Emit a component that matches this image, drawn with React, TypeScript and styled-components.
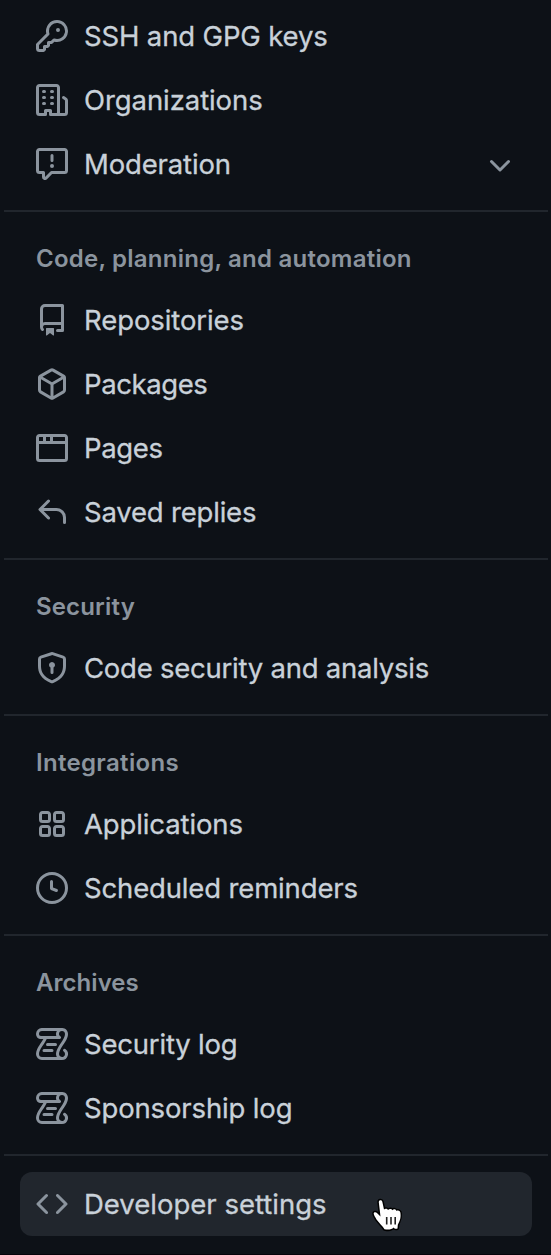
import React from 'react';
import styled, { createGlobalStyle } from 'styled-components';

const GlobalStyle = createGlobalStyle`
  *, *::before, *::after { box-sizing: border-box; }
  body {
    margin: 0;
    background: #0d1117;
    font-family: Inter, "Liberation Sans", sans-serif;
    -webkit-font-smoothing: antialiased;
  }
`;

const icons = {
  key: 'M10.5 0a5.499 5.499 0 1 1-1.288 10.848l-.932.932a.749.749 0 0 1-.53.22H7v.75a.749.749 0 0 1-.22.53l-.5.5a.749.749 0 0 1-.53.22H5v.75a.749.749 0 0 1-.22.53l-.5.5a.749.749 0 0 1-.53.22h-2A1.75 1.75 0 0 1 0 14.25v-2c0-.199.079-.389.22-.53l4.932-4.932A5.5 5.5 0 0 1 10.5 0Zm-4 5.5c-.001.431.069.86.205 1.269a.75.75 0 0 1-.181.768L1.5 12.56v1.69c0 .138.112.25.25.25h1.69l.06-.06v-1.19a.75.75 0 0 1 .75-.75h1.19l.06-.06v-1.19a.75.75 0 0 1 .75-.75h1.19l1.023-1.025a.75.75 0 0 1 .768-.18A4 4 0 1 0 6.5 5.5ZM11 6a1 1 0 1 1 0-2 1 1 0 0 1 0 2Z',
  organization: 'M1.75 16A1.75 1.75 0 0 1 0 14.25V1.75C0 .784.784 0 1.75 0h8.5C11.216 0 12 .784 12 1.75v12.5c0 .085-.006.168-.018.25h2.268a.25.25 0 0 0 .25-.25V8.285a.25.25 0 0 0-.111-.208l-1.055-.703a.749.749 0 1 1 .832-1.248l1.055.703c.487.325.779.871.779 1.456v5.965A1.75 1.75 0 0 1 14.25 16h-3.5a.766.766 0 0 1-.197-.026c-.099.017-.2.026-.303.026h-3a.75.75 0 0 1-.75-.75V14h-1v1.25a.75.75 0 0 1-.75.75Zm-.25-1.75c0 .138.112.25.25.25H4v-1.25a.75.75 0 0 1 .75-.75h2.5a.75.75 0 0 1 .75.75v1.25h2.25a.25.25 0 0 0 .25-.25V1.75a.25.25 0 0 0-.25-.25h-8.5a.25.25 0 0 0-.25.25ZM3.75 6h.5a.75.75 0 0 1 0 1.5h-.5a.75.75 0 0 1 0-1.5ZM3 3.75A.75.75 0 0 1 3.75 3h.5a.75.75 0 0 1 0 1.5h-.5A.75.75 0 0 1 3 3.75Zm4 3A.75.75 0 0 1 7.75 6h.5a.75.75 0 0 1 0 1.5h-.5A.75.75 0 0 1 7 6.75ZM7.75 3h.5a.75.75 0 0 1 0 1.5h-.5a.75.75 0 0 1 0-1.5ZM3 9.75A.75.75 0 0 1 3.75 9h.5a.75.75 0 0 1 0 1.5h-.5A.75.75 0 0 1 3 9.75ZM7.75 9h.5a.75.75 0 0 1 0 1.5h-.5a.75.75 0 0 1 0-1.5Z',
  report: 'M0 1.75C0 .784.784 0 1.75 0h12.5C15.216 0 16 .784 16 1.75v9.5A1.75 1.75 0 0 1 14.25 13H8.06l-2.573 2.573A1.458 1.458 0 0 1 3 14.543V13H1.75A1.75 1.75 0 0 1 0 11.25Zm1.75-.25a.25.25 0 0 0-.25.25v9.5c0 .138.112.25.25.25h2a.75.75 0 0 1 .75.75v2.19l2.72-2.72a.749.749 0 0 1 .53-.22h6.5a.25.25 0 0 0 .25-.25v-9.5a.25.25 0 0 0-.25-.25Zm7 2.25v2.5a.75.75 0 0 1-1.5 0v-2.5a.75.75 0 0 1 1.5 0ZM9 9a1 1 0 1 1-2 0 1 1 0 0 1 2 0Z',
  repo: 'M2 2.5A2.5 2.5 0 0 1 4.5 0h8.75a.75.75 0 0 1 .75.75v12.5a.75.75 0 0 1-.75.75h-2.5a.75.75 0 0 1 0-1.5h1.75v-2h-8a1 1 0 0 0-.714 1.7.75.75 0 1 1-1.072 1.05A2.495 2.495 0 0 1 2 11.5Zm10.5-1h-8a1 1 0 0 0-1 1v6.708A2.486 2.486 0 0 1 4.5 9h8ZM5 12.25a.25.25 0 0 1 .25-.25h3.5a.25.25 0 0 1 .25.25v3.25a.25.25 0 0 1-.4.2l-1.45-1.087a.249.249 0 0 0-.3 0L5.4 15.7a.25.25 0 0 1-.4-.2Z',
  package: 'm8.878.392 5.25 3.045c.54.314.872.89.872 1.514v6.098a1.75 1.75 0 0 1-.872 1.514l-5.25 3.045a1.75 1.75 0 0 1-1.756 0l-5.25-3.045A1.75 1.75 0 0 1 1 11.049V4.951c0-.624.332-1.201.872-1.514L7.122.392a1.75 1.75 0 0 1 1.756 0ZM7.875 1.69l-4.63 2.685L8 7.133l4.755-2.758-4.63-2.685a.248.248 0 0 0-.25 0ZM2.5 5.677v5.372c0 .09.047.171.125.216l4.625 2.683V8.432Zm6.25 8.271 4.625-2.683a.25.25 0 0 0 .125-.216V5.677L8.75 8.432Z',
  browser: 'M0 2.75C0 1.784.784 1 1.75 1h12.5c.966 0 1.75.784 1.75 1.75v10.5A1.75 1.75 0 0 1 14.25 15H1.75A1.75 1.75 0 0 1 0 13.25ZM14.5 6h-13v7.25c0 .138.112.25.25.25h12.5a.25.25 0 0 0 .25-.25Zm-6-3.5v2h6V2.75a.25.25 0 0 0-.25-.25ZM5 2.5v2h2v-2Zm-3.25 0a.25.25 0 0 0-.25.25V4.5h2v-2Z',
  reply: 'M6.78 1.97a.75.75 0 0 1 0 1.06L3.81 6h6.44A4.75 4.75 0 0 1 15 10.75v2.5a.75.75 0 0 1-1.5 0v-2.5a3.25 3.25 0 0 0-3.25-3.25H3.81l2.97 2.97a.749.749 0 0 1-.326 1.275.749.749 0 0 1-.734-.215L1.47 7.28a.75.75 0 0 1 0-1.06l4.25-4.25a.75.75 0 0 1 1.06 0Z',
  shieldLock: 'm8.533.133 5.25 1.68A1.75 1.75 0 0 1 15 3.48V7c0 1.566-.32 3.182-1.303 4.682-.983 1.498-2.585 2.813-5.032 3.855a1.697 1.697 0 0 1-1.33 0c-2.447-1.042-4.049-2.357-5.032-3.855C1.32 10.182 1 8.566 1 7V3.48a1.755 1.755 0 0 1 1.217-1.667l5.25-1.68a1.748 1.748 0 0 1 1.066 0Zm-.61 1.429.001.001-5.25 1.68a.251.251 0 0 0-.174.237V7c0 1.36.275 2.666 1.057 3.859.784 1.194 2.121 2.342 4.366 3.298a.196.196 0 0 0 .154 0c2.245-.957 3.582-2.103 4.366-3.297C13.225 9.666 13.5 8.358 13.5 7V3.48a.25.25 0 0 0-.174-.238l-5.25-1.68a.25.25 0 0 0-.153 0ZM9.5 6.5c0 .536-.286 1.032-.75 1.3v2.45a.75.75 0 0 1-1.5 0V7.8A1.5 1.5 0 1 1 9.5 6.5Z',
  apps: 'M1.5 3.25c0-.966.784-1.75 1.75-1.75h2.5c.966 0 1.75.784 1.75 1.75v2.5A1.75 1.75 0 0 1 5.75 7.5h-2.5A1.75 1.75 0 0 1 1.5 5.75Zm7 0c0-.966.784-1.75 1.75-1.75h2.5c.966 0 1.75.784 1.75 1.75v2.5a1.75 1.75 0 0 1-1.75 1.75h-2.5A1.75 1.75 0 0 1 8.5 5.75Zm-7 7c0-.966.784-1.75 1.75-1.75h2.5c.966 0 1.75.784 1.75 1.75v2.5a1.75 1.75 0 0 1-1.75 1.75h-2.5a1.75 1.75 0 0 1-1.75-1.75Zm7 0c0-.966.784-1.75 1.75-1.75h2.5c.966 0 1.75.784 1.75 1.75v2.5a1.75 1.75 0 0 1-1.75 1.75h-2.5a1.75 1.75 0 0 1-1.75-1.75ZM3.25 3a.25.25 0 0 0-.25.25v2.5c0 .138.112.25.25.25h2.5A.25.25 0 0 0 6 5.75v-2.5A.25.25 0 0 0 5.75 3Zm7 0a.25.25 0 0 0-.25.25v2.5c0 .138.112.25.25.25h2.5a.25.25 0 0 0 .25-.25v-2.5a.25.25 0 0 0-.25-.25Zm-7 7a.25.25 0 0 0-.25.25v2.5c0 .138.112.25.25.25h2.5a.25.25 0 0 0 .25-.25v-2.5a.25.25 0 0 0-.25-.25Zm7 0a.25.25 0 0 0-.25.25v2.5c0 .138.112.25.25.25h2.5a.25.25 0 0 0 .25-.25v-2.5a.25.25 0 0 0-.25-.25Z',
  clock: 'M8 0a8 8 0 1 1 0 16A8 8 0 0 1 8 0ZM1.5 8a6.5 6.5 0 1 0 13 0 6.5 6.5 0 0 0-13 0Zm7-3.25v2.992l2.028.812a.75.75 0 0 1-.557 1.392l-2.5-1A.751.751 0 0 1 7 8.25v-3.5a.75.75 0 0 1 1.5 0Z',
  log: 'M5 8.25a.75.75 0 0 1 .75-.75h4a.75.75 0 0 1 0 1.5h-4A.75.75 0 0 1 5 8.25ZM4 10.5A.75.75 0 0 0 4 12h4a.75.75 0 0 0 0-1.5H4ZM13-.005c1.654 0 3 1.328 3 3 0 .982-.338 1.933-.783 2.818-.443.879-1.028 1.758-1.582 2.588l-.011.017c-.568.853-1.104 1.659-1.501 2.446-.398.789-.623 1.494-.623 2.136a1.5 1.5 0 1 0 2.333-1.248.75.75 0 0 1 .834-1.246A3 3 0 0 1 13 16H3a3 3 0 0 1-3-3c0-1.582.891-3.135 1.777-4.506.209-.322.418-.637.623-.946.473-.709.923-1.386 1.287-2.048H2.51c-.576 0-1.381-.133-1.907-.783A2.68 2.68 0 0 1 0 2.995a3 3 0 0 1 3-3Zm0 1.5a1.5 1.5 0 0 0-1.5 1.5c0 .476.223.834.667 1.132A.75.75 0 0 1 11.75 5.5H5.368c-.467 1.003-1.141 2.015-1.773 2.963-.192.289-.381.571-.558.845C2.13 10.711 1.5 11.916 1.5 13A1.5 1.5 0 0 0 3 14.5h7.401A2.989 2.989 0 0 1 10 13c0-.979.338-1.928.784-2.812.441-.874 1.023-1.748 1.575-2.576l.017-.026c.568-.853 1.103-1.658 1.501-2.448.398-.79.623-1.497.623-2.143 0-.838-.669-1.5-1.5-1.5Zm-10 0a1.5 1.5 0 0 0-1.5 1.5c0 .321.1.569.27.778.097.12.325.227.74.227h7.674A2.737 2.737 0 0 1 10 2.995c0-.546.146-1.059.401-1.5Z',
  code: 'm11.28 3.22 4.25 4.25a.75.75 0 0 1 0 1.06l-4.25 4.25a.749.749 0 0 1-1.275-.326.749.749 0 0 1 .215-.734L13.94 8l-3.72-3.72a.749.749 0 0 1 .326-1.275.749.749 0 0 1 .734.215Zm-6.56 0a.751.751 0 0 1 1.042.018.751.751 0 0 1 .018 1.042L2.06 8l3.72 3.72a.749.749 0 0 1-.326 1.275.749.749 0 0 1-.734-.215L.47 8.53a.75.75 0 0 1 0-1.06Z',
  chevronDown: 'M12.78 6.22a.749.749 0 0 1 0 1.06l-4.25 4.25a.749.749 0 0 1-1.06 0L3.22 7.28a.749.749 0 1 1 1.06-1.06L8 9.939l3.72-3.719a.749.749 0 0 1 1.06 0Z',
};

type IconName = keyof typeof icons;

const Sidebar = styled.nav`
  width: 551px;
  height: 1255px;
  padding: 4px 3px 0 4px;
  border-bottom: 1px solid #06030b;
  overflow: hidden;
  background: #0d1117;
`;

const List = styled.ul`
  margin: 0;
  padding: 0 16px;
  list-style: none;
`;

const Item = styled.li<{ $active?: boolean }>`
  position: relative;
  display: flex;
  align-items: center;
  gap: 16px;
  height: 64px;
  padding: 0 16px;
  border-radius: 12px;
  background: ${({ $active }) => ($active ? '#21262d' : 'transparent')};
`;

const Label = styled.span<{ $spacing?: number }>`
  flex: 1;
  color: #c9d1d9;
  font-size: 27.5px;
  font-weight: 400;
  line-height: 40px;
  letter-spacing: ${({ $spacing = -0.15 }) => $spacing}px;
  white-space: nowrap;
  -webkit-text-stroke: 0.3px #c9d1d9;
`;

const Divider = styled.hr<{ $gapAfter?: number }>`
  height: 2px;
  margin: 14px 0 ${({ $gapAfter = 0 }) => $gapAfter}px;
  border: 0;
  background: #21262d;
`;

const Heading = styled.h3<{ $spacing?: number }>`
  height: 76px;
  margin: 0;
  padding: 29px 32px 0;
  color: #8b949e;
  font-size: 24px;
  font-weight: 600;
  line-height: 36px;
  letter-spacing: ${({ $spacing = 0.24 }) => $spacing}px;
  white-space: nowrap;
`;

const IconSvg = styled.svg`
  flex: none;
  width: 32px;
  height: 32px;
  fill: #8b949e;
`;

const Pointer = styled.svg`
  position: absolute;
  left: 352px;
  top: 25px;
  width: 32px;
  height: 38px;
`;

const Icon = ({ name }: { name: IconName }) => (
  <IconSvg viewBox="0 0 16 16" aria-hidden="true">
    <path d={icons[name]} />
  </IconSvg>
);

const HandPointer = () => (
  <Pointer viewBox="0 0 32 38" aria-hidden="true">
    <path
      d="M6.8 5.2C6.8 3 9.6 2.6 10.3 4.8L12 12.5C13 11.3 15.4 11.5 16 13C17.3 11.4 19.7 11.6 20.4 13.2C21.7 11.8 24 12.2 24.5 14C26.3 13 28.5 14 28.5 16.5C29 22 27.5 24 25.8 27.8L25.5 31.5C24 32 22.5 32 21.5 30.5C20 32.6 16 33 12.5 32.2C11 29.5 7 26 4.5 22.5C3.3 20.3 2 18.5 1.7 16.8C1.8 14.8 4 15 5.2 16.2L8.5 19.5Z"
      fill="#fff"
      stroke="#000"
      strokeWidth="3"
      strokeLinejoin="round"
      paintOrder="stroke"
    />
    <path d="M14.7 20v7.5M19 20v7.5M23.2 20v7.5" stroke="#222" strokeWidth="1.6" />
  </Pointer>
);

interface Entry {
  icon: IconName;
  label: string;
  spacing?: number;
  expandable?: boolean;
}

interface Section {
  title?: string;
  titleSpacing?: number;
  entries: Entry[];
}

const sections: Section[] = [
  {
    entries: [
      { icon: 'key', label: 'SSH and GPG keys' },
      { icon: 'organization', label: 'Organizations', spacing: -0.08 },
      { icon: 'report', label: 'Moderation', expandable: true },
    ],
  },
  {
    title: 'Code, planning, and automation',
    entries: [
      { icon: 'repo', label: 'Repositories', spacing: -0.09 },
      { icon: 'package', label: 'Packages', spacing: -0.4 },
      { icon: 'browser', label: 'Pages', spacing: -0.38 },
      { icon: 'reply', label: 'Saved replies', spacing: -0.2 },
    ],
  },
  {
    title: 'Security',
    titleSpacing: 0.16,
    entries: [{ icon: 'shieldLock', label: 'Code security and analysis', spacing: -0.24 }],
  },
  {
    title: 'Integrations',
    titleSpacing: 0.32,
    entries: [
      { icon: 'apps', label: 'Applications', spacing: -0.12 },
      { icon: 'clock', label: 'Scheduled reminders' },
    ],
  },
  {
    title: 'Archives',
    titleSpacing: 0.05,
    entries: [
      { icon: 'log', label: 'Security log', spacing: -0.2 },
      { icon: 'log', label: 'Sponsorship log' },
    ],
  },
];

export default function App() {
  return (
    <>
      <GlobalStyle />
      <Sidebar>
        {sections.map((section, index) => (
          <React.Fragment key={section.title ?? 'access'}>
            {index > 0 && <Divider />}
            {section.title && <Heading $spacing={section.titleSpacing}>{section.title}</Heading>}
            <List>
              {section.entries.map((entry) => (
                <Item key={entry.label}>
                  <Icon name={entry.icon} />
                  <Label $spacing={entry.spacing}>{entry.label}</Label>
                  {entry.expandable && <Icon name="chevronDown" />}
                </Item>
              ))}
            </List>
          </React.Fragment>
        ))}
        <Divider $gapAfter={16} />
        <List>
          <Item $active>
            <Icon name="code" />
            <Label $spacing={0}>Developer settings</Label>
            <HandPointer />
          </Item>
        </List>
      </Sidebar>
    </>
  );
}
